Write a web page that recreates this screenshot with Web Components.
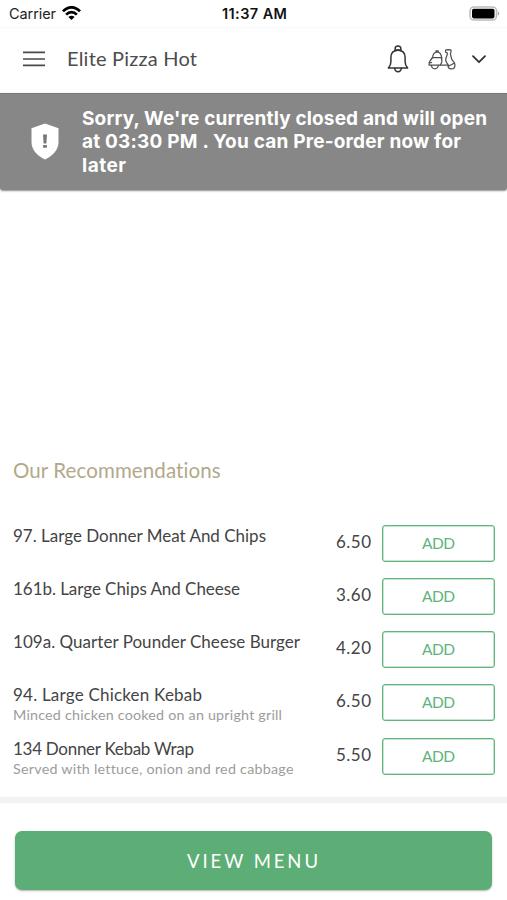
<!DOCTYPE html>
<html lang="en">
<head>
<meta charset="utf-8">
<title>Elite Pizza Hot</title>
<style>
html, body { margin: 0; background: #fff; }
body { width: 507px; height: 900px; overflow: hidden; font-family: Lato, "Open Sans", sans-serif; color: #484848; }
</style>
</head>
<body>
<pizza-app></pizza-app>
<script>
const define = (name, html, ready) => customElements.define(name, class extends HTMLElement {
  connectedCallback() {
    if (this.shadowRoot) return;
    this.attachShadow({ mode: 'open' }).innerHTML = html;
    if (ready) ready.call(this, this.shadowRoot);
  }
});

/* One line of text, tracked so that it spans the given width. */
define('fit-line', `
  <style>
    :host { display: block; white-space: nowrap; }
    span { display: inline-block; white-space: pre; }
  </style><span></span>`, function (root) {
  const span = root.querySelector('span');
  span.textContent = this.getAttribute('text');
  const w = Number(this.getAttribute('w'));
  const gaps = span.textContent.length - 1;
  const spacing = (w - span.getBoundingClientRect().width) / gaps;
  span.style.letterSpacing = spacing + 'px';
  span.style.marginRight = -spacing + 'px';
});

define('status-bar', `
  <style>
    :host { display: grid; grid-template-columns: 1fr auto 1fr; align-items: center; height: 27px; padding: 0 7px 0 9px; box-sizing: border-box;
      font: 400 14.5px/27px Inter, sans-serif; color: #222; }
    .left { display: flex; align-items: center; gap: 6px; }
    .time { font-weight: 600; color: #111; }
    .right { display: flex; justify-content: flex-end; }
    svg { display: block; }
  </style>
  <div class="left"><fit-line text="Carrier" w="47"></fit-line>
    <svg width="19" height="15" viewBox="0 0 19 15" fill="none" stroke="#000" stroke-width="2.7">
      <path d="M1 5.4C6-.1 13-.1 18 5.4M4.1 8.6c3.3-3.2 7.5-3.2 10.8 0"/><path d="M6.4 10.9c1.8-1.7 4.4-1.7 6.2 0L9.5 14z" fill="#000" stroke="none"/>
    </svg></div>
  <fit-line class="time" text="11:37 AM" w="65"></fit-line>
  <div class="right">
    <svg width="31" height="15" viewBox="0 0 31 15">
      <rect x="1" y=".9" width="26.5" height="13.2" rx="4" fill="#fff" stroke="#bcbcbc" stroke-width="1.5"/>
      <rect x="3" y="2.8" width="22.5" height="9.6" rx="1.8" fill="#000"/>
      <path d="M28.8 5.2q3 2.3 0 4.6z" fill="#aaa"/>
    </svg></div>`);

define('app-bar', `
  <style>
    :host { display: flex; align-items: center; height: 66px; padding: 0 21px 3px 23px; box-sizing: border-box; border-top: 1px solid #fafafa; }
    svg { display: block; flex: none; }
    .title { font-size: 20px; line-height: 24px; margin-left: 22px; flex: 1; color: #4c4c4c; padding-bottom: 3px; }
    .bell { margin-right: 19px; } .scooter { margin-right: 16px; }
  </style>
  <svg width="22" height="16" viewBox="0 0 22 16" stroke="#4a4a4a" stroke-width="1.7"><path d="M0 1.4h22M0 8h22M0 14.4h22"/></svg>
  <fit-line class="title" text="Elite Pizza Hot" w="130"></fit-line>
  <svg class="bell" width="22" height="28" viewBox="0 0 22 28" fill="none" stroke="#333" stroke-width="1.5" stroke-linejoin="round" stroke-linecap="round">
    <path d="M1.4 22.9h19.2c-2-1.9-2.5-3.1-2.5-6.1v-4.2c0-4.5-2.1-7.4-7.1-7.4s-7.1 2.9-7.1 7.4v4.2c0 3-.5 4.2-2.5 6.1z"/>
    <path d="M8.1 5.8V4a2.9 2.9 0 0 1 5.8 0v1.8M8.2 5.1h5.6M7.7 23.2c.4 4.6 6.2 4.6 6.6 0" />
  </svg>
  <svg class="scooter" width="28" height="21" viewBox="0 0 28 21" fill="none" stroke="#505050" stroke-width="1.25" stroke-linejoin="round" stroke-linecap="round">
    <path d="M4.6 8.5C4.9 4.9 6.5 3 9.100 3s4.200 1.900 4.500 5.500M8 3V1.800h2.200V3M4.200 8.700h9.800"/>
    <path d="M4.500 8.700C2.500 10.600 1 13.200 1 16.100h11.200c1.400-1.800 2-4.800 1.200-7.400M1 13.600h2.600"/>
    <path d="M3.400 16.300c.4 4.600 6.500 4.600 6.900 0"/>
    <path d="M12.200 16.100h8.200M17.600 3.200V1.200l2.300-.6 3 .3c.3 1.500.1 2.700-.5 3.900l1.200 5c.5 1.600 2.100 2.600 2.900 4.200l-6.100 3.200M17.600 3.200l1.800.8c.2 2.900-2.500 5.100-1.500 8 .5 1.500 1.500 2.700 2.500 4.100"/>
    <path d="M20 17c.4 4.200 6.900 3.900 6.900-.6 0-1-.2-1.700-.5-2.400"/>
  </svg>
  <svg width="14" height="9" viewBox="0 0 14 9" fill="none" stroke="#333" stroke-width="1.8" stroke-linecap="round" stroke-linejoin="round"><path d="M1 1.200l6 6 6-6"/></svg>`);

define('closed-banner', `
  <style>
    :host { display: flex; align-items: center; height: 97px; box-sizing: border-box; padding: 0 0 2px 31px; gap: 23px;
      background: #878787; border-top: 1px solid #777; border-radius: 0 0 3px 3px; box-shadow: 0 1px 2px rgba(0,0,0,.45); color: #fff;
      font: 700 19px/23.5px Inter, sans-serif; }
    svg { display: block; flex: none; }
    .message { padding-top: 2px; }
  </style>
  <svg width="28" height="37" viewBox="0 0 28 37"><path d="M14 .5l13.500 4.700V19c0 8-5.500 13.500-13.500 17.500C6 32.500 .5 27 .5 19V5.200z" fill="#fff"/>
    <path d="M12 11.500h4l-.6 9h-2.800z" fill="#777"/><rect x="12" y="22" width="4" height="2.800" rx=".8" fill="#777"/></svg>
  <div class="message">
    <fit-line text="Sorry, We're currently closed and will open" w="405"></fit-line>
    <fit-line text="at 03:30 PM . You can Pre-order now for" w="379"></fit-line>
    <fit-line text="later" w="44"></fit-line>
  </div>`);

define('add-button', `
  <style>
    :host { display: block; width: 113px; height: 37px; }
    button { display: flex; justify-content: center; align-items: center; width: 100%; height: 100%; margin: 0; padding: 0 0 1px; box-sizing: border-box;
      border: 1px solid #62b67d; box-shadow: inset 0 0 0 .5px #8ccba0; border-radius: 3px; background: #fff; color: #60b37c; font: 400 15.500px/20px Lato, sans-serif; }
  </style><button><fit-line text="ADD" w="33"></fit-line></button>`);

/* One dish: name, optional description, price and its add button. */
define('menu-row', '', function (root) {
  const d = this.data;
  root.innerHTML = `
    <style>
      :host { display: grid; grid-template-columns: 1fr auto 113px; column-gap: 11px; height: 37px; padding: 0 12px 0 13px; }
      .name { font-size: 17px; line-height: 22px; color: #444; }
      .desc { font-size: 14.300px; line-height: 17px; color: #9c9c9c; }
      .price { font-size: 17px; line-height: 34px; color: #444; }
    </style>
    <div class="info"><fit-line class="name" text="${d.name}" w="${d.w}"></fit-line>
    ${d.desc ? `<fit-line class="desc" text="${d.desc}" w="${d.dw}"></fit-line>` : ''}</div>
    <fit-line class="price" text="${d.price}" w="35"></fit-line><add-button></add-button>`;
});

function menuRow(name, w, price, desc, dw) {
  const row = document.createElement('menu-row');
  row.data = { name, w, price, desc, dw };
  return row;
}

define('recommendation-list', `
  <style>
    :host { display: block; padding-top: 268px; }
    .heading { font-size: 20.500px; line-height: 24px; padding-left: 13px; color: #b2a98a; }
    .rows { display: flex; flex-direction: column; gap: 16px; margin-top: 43px; }
    .rows > :last-child { margin-top: 1px; }
  </style>
  <fit-line class="heading" text="Our Recommendations" w="208"></fit-line>
  <div class="rows"></div>`, function (root) {
  root.querySelector('.rows').append(
    menuRow('97. Large Donner Meat And Chips', 253, '6.50'),
    menuRow('161b. Large Chips And Cheese', 227, '3.60'),
    menuRow('109a. Quarter Pounder Cheese Burger', 287, '4.20'),
    menuRow('94. Large Chicken Kebab', 189, '6.50', 'Minced chicken cooked on an upright grill', 269),
    menuRow('134 Donner Kebab Wrap', 181, '5.50', 'Served with lettuce, onion and red cabbage', 280));
});

define('view-menu', `
  <style>
    :host { display: block; margin-top: 22px; border-top: 6px solid #f2f2f2; padding: 28px 15px 0; }
    button { display: flex; justify-content: center; align-items: center; width: 100%; height: 59px; border: 0; border-radius: 7px; padding: 0 2px 0 0; margin: 0;
      background: #5dae76; color: #fff; font: 400 18.500px/24px Lato, sans-serif; box-shadow: 0 1px 2px rgba(0,0,0,.3); }
  </style><button><fit-line text="VIEW MENU" w="131"></fit-line></button>`);

define('pizza-app', `
  <style>:host { display: block; width: 507px; height: 900px; overflow: hidden; background: #fff; }</style>
  <status-bar></status-bar><app-bar></app-bar><closed-banner></closed-banner>
  <recommendation-list></recommendation-list><view-menu></view-menu>`);
</script>
</body>
</html>
